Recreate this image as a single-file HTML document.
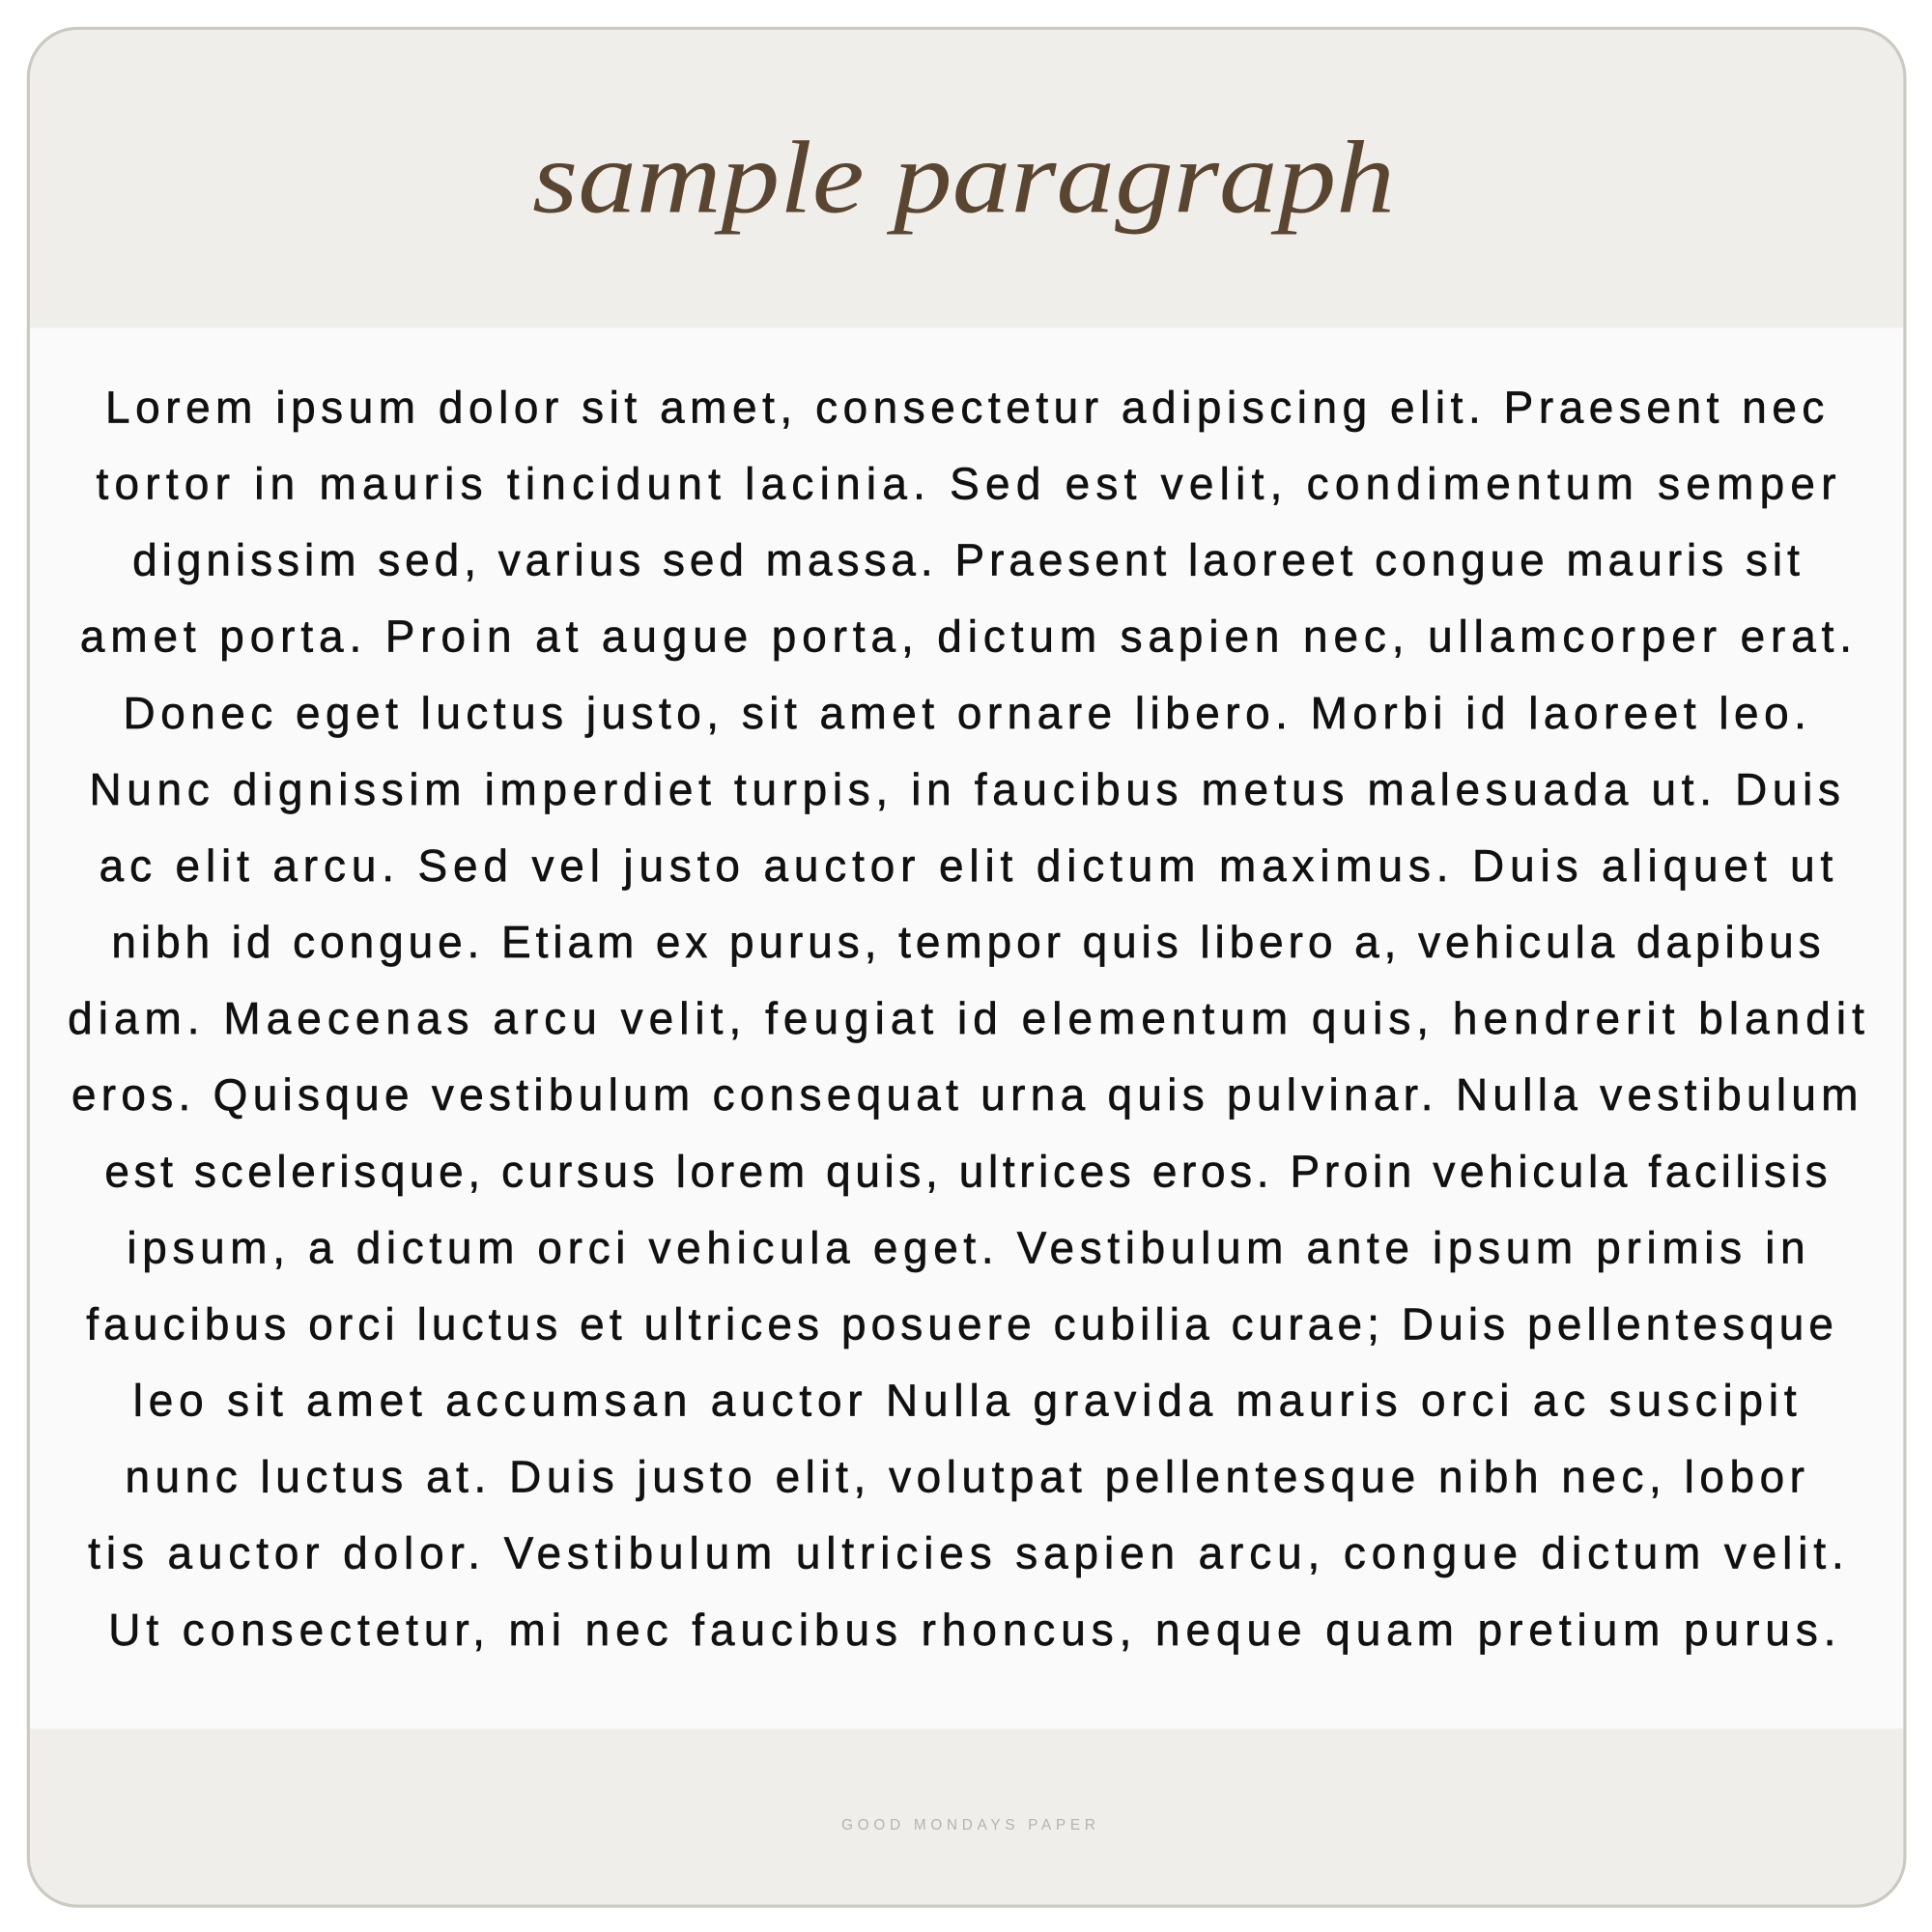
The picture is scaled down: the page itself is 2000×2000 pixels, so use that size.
<!DOCTYPE html>
<html><head><meta charset="utf-8"><style>html,body{margin:0;padding:0;background:#fff}svg{display:block}</style></head>
<body>
<svg width="2000" height="2000" viewBox="0 0 1568 1568" xmlns="http://www.w3.org/2000/svg">
<defs><clipPath id="c"><rect x="23" y="23" width="1523" height="1524" rx="40"/></clipPath></defs>
<g clip-path="url(#c)">
<rect x="0" y="0" width="1568" height="1568" fill="#efeeea"/>
<rect x="0" y="266" width="1568" height="1137" fill="#fafafa"/>
</g>
<rect x="23" y="23" width="1523" height="1524" rx="40" fill="none" stroke="#ccc9c1" stroke-width="2.5"/>
<text x="782" y="172" text-anchor="middle" font-family="Liberation Serif, serif" font-style="italic" font-size="84" fill="#5a4630" textLength="700" lengthAdjust="spacingAndGlyphs">sample paragraph</text>
<g font-family="Liberation Sans, sans-serif" font-size="36" fill="#111" stroke="#111" stroke-width="0.5" text-anchor="middle" lengthAdjust="spacingAndGlyphs">
<text x="783" y="343" textLength="1395">Lorem ipsum dolor sit amet, consectetur adipiscing elit. Praesent nec</text>
<text x="784" y="405" textLength="1412">tortor in mauris tincidunt lacinia. Sed est velit, condimentum semper</text>
<text x="784" y="467" textLength="1353">dignissim sed, varius sed massa. Praesent laoreet congue mauris sit</text>
<text x="784" y="529" textLength="1438">amet porta. Proin at augue porta, dictum sapien nec, ullamcorper erat.</text>
<text x="783" y="591" textLength="1366">Donec eget luctus justo, sit amet ornare libero. Morbi id laoreet leo.</text>
<text x="783" y="653" textLength="1421">Nunc dignissim imperdiet turpis, in faucibus metus malesuada ut. Duis</text>
<text x="784" y="715" textLength="1407">ac elit arcu. Sed vel justo auctor elit dictum maximus. Duis aliquet ut</text>
<text x="784" y="777" textLength="1387">nibh id congue. Etiam ex purus, tempor quis libero a, vehicula dapibus</text>
<text x="784" y="839" textLength="1458">diam. Maecenas arcu velit, feugiat id elementum quis, hendrerit blandit</text>
<text x="783" y="901" textLength="1450">eros. Quisque vestibulum consequat urna quis pulvinar. Nulla vestibulum</text>
<text x="784" y="963" textLength="1398">est scelerisque, cursus lorem quis, ultrices eros. Proin vehicula facilisis</text>
<text x="784" y="1025" textLength="1362">ipsum, a dictum orci vehicula eget. Vestibulum ante ipsum primis in</text>
<text x="779" y="1087" textLength="1418">faucibus orci luctus et ultrices posuere cubilia curae; Duis pellentesque</text>
<text x="783" y="1149" textLength="1350">leo sit amet accumsan auctor Nulla gravida mauris orci ac suscipit</text>
<text x="783" y="1211" textLength="1363">nunc luctus at. Duis justo elit, volutpat pellentesque nibh nec, lobor</text>
<text x="784" y="1273" textLength="1425">tis auctor dolor. Vestibulum ultricies sapien arcu, congue dictum velit.</text>
<text x="789" y="1335" textLength="1402">Ut consectetur, mi nec faucibus rhoncus, neque quam pretium purus.</text>
</g>
<text x="786" y="1485" text-anchor="middle" font-family="Liberation Sans, sans-serif" font-size="12" fill="#b5b3ae" textLength="206" lengthAdjust="spacing">GOOD MONDAYS PAPER</text>
</svg>
</body></html>
